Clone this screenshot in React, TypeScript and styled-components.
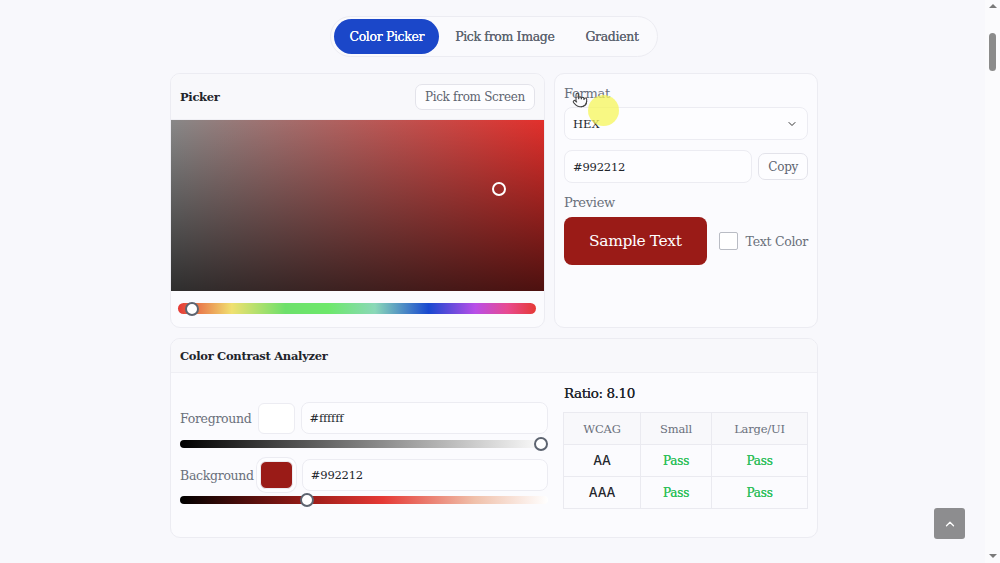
import React from 'react'
import styled, { createGlobalStyle } from 'styled-components'
import { ChevronDown, ChevronUp, Pointer } from 'lucide-react'

const Global = createGlobalStyle`
  html, body { margin: 0; padding: 0; height: 100%; overflow: hidden; }
  body {
    background: #f8f8fc;
    font-family: "Roboto Slab", "DejaVu Serif", serif;
    color: #22252b;
  }
  * { box-sizing: border-box; }
`

const Page = styled.div`
  display: flex;
  width: 1000px;
  height: 563px;
`

const Main = styled.main`
  flex: 1;
  display: flex;
  flex-direction: column;
  align-items: center;
  padding: 16px 0 0 3px;
`

const Tabs = styled.nav`
  display: flex;
  align-items: center;
  gap: 1px;
  padding: 3px;
  height: 41px;
  border: 1px solid #ececf2;
  border-radius: 21px;
  background: #fafafd;
`

const Tab = styled.button<{ $active?: boolean }>`
  height: 35px;
  padding: 0 15px;
  border: none;
  border-radius: 18px;
  font: inherit;
  font-size: 12.5px;
  font-weight: 400;
  letter-spacing: -0.35px;
  background: ${p => (p.$active ? '#1b47c9' : 'transparent')};
  color: ${p => (p.$active ? '#fff' : '#5d6470')};
  text-shadow: 0 0 0.4px currentColor;
`

const Container = styled.div`
  width: 648px;
  margin-top: 16px;
  display: flex;
  flex-direction: column;
  gap: 10px;
`

const TopRow = styled.div`
  display: grid;
  grid-template-columns: 375px 264px;
  gap: 9px;
`

const Card = styled.section<{ $height: number }>`
  height: ${p => p.$height}px;
  border: 1px solid #ececf2;
  border-radius: 10px;
  background: #fbfbfe;
  overflow: hidden;
  display: flex;
  flex-direction: column;
`

const CardHeader = styled.header<{ $h: number }>`
  height: ${p => p.$h}px;
  flex-shrink: 0;
  display: flex;
  align-items: center;
  justify-content: space-between;
  padding: 0 9px 0 9px;
  background: #f8f8fb;
  border-bottom: 1px solid #efeff4;
`

const Title = styled.h2`
  margin: 0;
  font-size: 11.5px;
  font-weight: 600;
  letter-spacing: -0.3px;
  color: #22252b;
`

const OutlineButton = styled.button`
  height: 26px;
  padding: 0 9px;
  border: 1px solid #e3e3ea;
  border-radius: 7px;
  background: #fdfdff;
  font: inherit;
  font-size: 12px;
  letter-spacing: -0.3px;
  color: #5d6470;
`

const SatVal = styled.div`
  position: relative;
  height: 171px;
  background:
    linear-gradient(to bottom, rgba(0, 0, 0, 0), rgba(0, 0, 0, 0.66)),
    linear-gradient(to right, #888, rgba(136, 136, 136, 0)),
    #e2302c;
`

const Handle = styled.span<{ $x: number; $y: number; $ring?: string }>`
  position: absolute;
  left: ${p => p.$x}px;
  top: ${p => p.$y}px;
  width: 14px;
  height: 14px;
  margin: -7px 0 0 -7px;
  border-radius: 50%;
  border: 2px solid ${p => p.$ring || '#fff'};
  background: ${p => (p.$ring ? '#fff' : 'transparent')};
`

const SliderTrack = styled.div<{ $bg: string; $mt: number }>`
  position: relative;
  margin: ${p => p.$mt}px 8px 0 7px;
  height: 11px;
  border-radius: 6px;
  background: ${p => p.$bg};
`

const Side = styled.div`
  padding: 12px 9px 0 9px;
  display: flex;
  flex-direction: column;
`

const Label = styled.label<{ $size?: number }>`
  font-size: ${p => p.$size || 12.5}px;
  letter-spacing: -0.3px;
  color: #6a707b;
  white-space: nowrap;
`

const Select = styled.div`
  margin-top: 6px;
  height: 33px;
  border: 1px solid #ececf2;
  border-radius: 8px;
  background: #fdfdff;
  display: flex;
  align-items: center;
  justify-content: space-between;
  padding: 0 9px 0 8px;
  font-size: 11.5px;
  color: #22252b;
`

const InputRow = styled.div`
  margin-top: 10px;
  display: flex;
  align-items: center;
  gap: 6px;
`

const TextInput = styled.div<{ $h?: number }>`
  flex: 1;
  height: ${p => p.$h || 33}px;
  border: 1px solid #ececf2;
  border-radius: 8px;
  background: #fdfdff;
  display: flex;
  align-items: center;
  padding: 0 8px;
  font-size: 11.5px;
  letter-spacing: -0.2px;
  color: #22252b;
`

const PreviewRow = styled.div`
  margin-top: 7px;
  display: flex;
  align-items: center;
`

const Sample = styled.div`
  width: 147px;
  height: 48px;
  border-radius: 8px;
  background: #9a1b17;
  color: #fff;
  display: flex;
  align-items: center;
  justify-content: center;
  font-size: 15.5px;
  letter-spacing: -0.4px;
`

const Check = styled.span`
  width: 19px;
  height: 18px;
  margin: 0 8px 0 12px;
  border: 1px solid #b9bcc4;
  border-radius: 2px;
  background: #fff;
  flex-shrink: 0;
`

const ContrastBody = styled.div`
  flex: 1;
  display: grid;
  grid-template-columns: 368px 245px;
  gap: 15px;
  padding: 0 9px;
`

const ContrastLeft = styled.div`
  padding-top: 29px;
`

const ColorRow = styled.div<{ $mt?: number }>`
  display: flex;
  align-items: center;
  gap: 6px;
  margin-top: ${p => p.$mt || 0}px;
`

const Swatch = styled.span<{ $color: string }>`
  width: ${p => (p.$color === '#fff' ? 37 : 33)}px;
  height: ${p => (p.$color === '#fff' ? 31 : 28)}px;
  border-radius: 6px;
  border: 1px solid #ececf2;
  background: ${p => p.$color};
  margin: 0 ${p => (p.$color === '#fff' ? 0 : 3)}px 0 0;
  box-shadow: ${p => (p.$color === '#fff' ? 'none' : '0 0 0 3px #fdfdff, 0 0 0 4px #ececf2')};
`

const SmallTrack = styled.div<{ $bg: string; $mt: number }>`
  position: relative;
  margin-top: ${p => p.$mt}px;
  height: 8px;
  border-radius: 4px;
  background: ${p => p.$bg};
`

const ContrastRight = styled.div`
  padding-top: 12px;
`

const Ratio = styled.div`
  font-size: 13.5px;
  font-weight: 400;
  letter-spacing: -0.4px;
  color: #22252b;
  margin-left: 1px;
  text-shadow: 0 0 0.5px currentColor;
`

const Table = styled.table`
  margin-top: 11px;
  width: 100%;
  border-collapse: collapse;
  font-size: 11.5px;
  letter-spacing: -0.2px;
  th, td {
    height: 32px;
    border: 1px solid #eaeaf0;
    text-align: center;
  }
  th { font-weight: 400; color: #6a707b; background: #f8f8fb; }
  td { font-family: "Inter", "DejaVu Sans", sans-serif; font-weight: 500; font-size: 12.5px; color: #22252b; }
`

const Pass = styled.span`
  font-family: "Roboto Slab", "DejaVu Serif", serif;
  color: #2fbf5b;
  font-size: 12px;
  text-shadow: 0 0 0.4px currentColor;
`

const Scrollbar = styled.aside`
  width: 15px;
  display: flex;
  flex-direction: column;
  align-items: center;
  background: #fbfbfd;
  padding-top: 4px;
`

const Arrow = styled.span<{ $down?: boolean }>`
  width: 0;
  height: 0;
  border-left: 4px solid transparent;
  border-right: 4px solid transparent;
  ${p => (p.$down ? 'border-top: 4px solid #7a7a7a;' : 'border-bottom: 4px solid #7a7a7a;')}
  ${p => (p.$down ? 'margin-top: auto; margin-bottom: 5px;' : '')}
`

const Thumb = styled.span`
  margin-top: 25px;
  width: 7px;
  height: 38px;
  border-radius: 4px;
  background: #8b8b8b;
`

const ToTop = styled.button`
  position: fixed;
  left: 934px;
  top: 508px;
  width: 31px;
  height: 31px;
  border: none;
  border-radius: 3px;
  background: #8d8d8f;
  color: #fff;
  display: flex;
  align-items: center;
  justify-content: center;
  padding: 0;
`

const Highlight = styled.div`
  position: fixed;
  left: 588px;
  top: 95px;
  width: 31px;
  height: 31px;
  border-radius: 50%;
  background: rgba(246, 246, 90, 0.75);
  pointer-events: none;
`

const Cursor = styled.div`
  position: fixed;
  left: 572px;
  top: 92px;
  color: #444;
  pointer-events: none;
`

const hue =
  'linear-gradient(to right, #e53935 0%, #f0e070 15%, #6de06b 30%, #6de86b 42%, #8ad8b8 55%, #1848d0 70%, #b84ee8 83%, #e84a90 92%, #e53935 100%)'

export default function App() {
  return (
    <>
      <Global />
      <Page>
        <Main>
          <Tabs>
            <Tab $active>Color Picker</Tab>
            <Tab>Pick from Image</Tab>
            <Tab>Gradient</Tab>
          </Tabs>
          <Container>
            <TopRow>
              <Card $height={255}>
                <CardHeader $h={46}>
                  <Title>Picker</Title>
                  <OutlineButton>Pick from Screen</OutlineButton>
                </CardHeader>
                <SatVal>
                  <Handle $x={328} $y={69} />
                </SatVal>
                <SliderTrack $bg={hue} $mt={12}>
                  <Handle $x={14} $y={5.5} $ring="#5d6470" />
                </SliderTrack>
              </Card>
              <Card $height={255}>
                <Side>
                  <Label $size={13}>Format</Label>
                  <Select>
                    HEX
                    <ChevronDown size={12} color="#333" strokeWidth={2} />
                  </Select>
                  <InputRow>
                    <TextInput>#992212</TextInput>
                    <OutlineButton style={{ height: 27 }}>Copy</OutlineButton>
                  </InputRow>
                  <Label $size={13} style={{ marginTop: 12 }}>Preview</Label>
                  <PreviewRow>
                    <Sample>Sample Text</Sample>
                    <Check />
                    <Label>Text Color</Label>
                  </PreviewRow>
                </Side>
              </Card>
            </TopRow>
            <Card $height={200}>
              <CardHeader $h={34}>
                <Title>Color Contrast Analyzer</Title>
              </CardHeader>
              <ContrastBody>
                <ContrastLeft>
                  <ColorRow>
                    <Label>Foreground</Label>
                    <Swatch $color="#fff" />
                    <TextInput $h={32}>#ffffff</TextInput>
                  </ColorRow>
                  <SmallTrack $bg="linear-gradient(to right, #000, #fff)" $mt={6}>
                    <Handle $x={361} $y={4} $ring="#5d6470" />
                  </SmallTrack>
                  <ColorRow $mt={11}>
                    <Label>Background</Label>
                    <Swatch $color="#9a1b17" />
                    <TextInput $h={32}>#992212</TextInput>
                  </ColorRow>
                  <SmallTrack
                    $bg="linear-gradient(to right, #000, #9a1b17 35%, #e53935 55%, #f0c0aa 80%, #fff)"
                    $mt={5}
                  >
                    <Handle $x={127} $y={4} $ring="#5d6470" />
                  </SmallTrack>
                </ContrastLeft>
                <ContrastRight>
                  <Ratio>Ratio: 8.10</Ratio>
                  <Table>
                    <thead>
                      <tr>
                        <th style={{ width: 77 }}>WCAG</th>
                        <th style={{ width: 71 }}>Small</th>
                        <th>Large/UI</th>
                      </tr>
                    </thead>
                    <tbody>
                      <tr>
                        <td>AA</td>
                        <td><Pass>Pass</Pass></td>
                        <td><Pass>Pass</Pass></td>
                      </tr>
                      <tr>
                        <td>AAA</td>
                        <td><Pass>Pass</Pass></td>
                        <td><Pass>Pass</Pass></td>
                      </tr>
                    </tbody>
                  </Table>
                </ContrastRight>
              </ContrastBody>
            </Card>
          </Container>
        </Main>
        <Scrollbar>
          <Arrow />
          <Thumb />
          <Arrow $down />
        </Scrollbar>
      </Page>
      <Highlight />
      <Cursor>
        <Pointer size={16} strokeWidth={1.6} />
      </Cursor>
      <ToTop>
        <ChevronUp size={14} strokeWidth={2.2} />
      </ToTop>
    </>
  )
}
